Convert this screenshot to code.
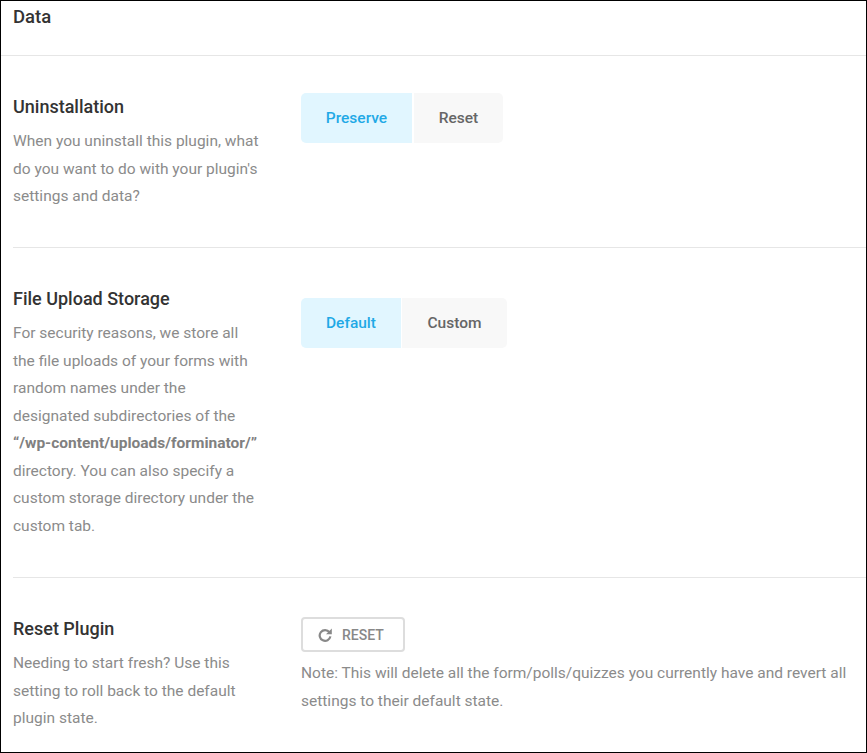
<div class="page">
  <div class="header"><h2>Data</h2></div>

  <section class="row first">
    <div class="label">
      <h3>Uninstallation</h3>
      <p>When you uninstall this plugin, what do you want to do with your plugin's settings and data?</p>
    </div>
    <div class="control">
      <div class="tabs">
        <button class="tab active preserve">Preserve</button>
        <button class="tab reset">Reset</button>
      </div>
    </div>
  </section>

  <section class="row second">
    <div class="label">
      <h3>File Upload Storage</h3>
      <p>For security reasons, we store all the file uploads of your forms with random names under the designated subdirectories of the <strong>“/wp-content/uploads/forminator/”</strong> directory. You can also specify a custom storage directory under the custom tab.</p>
    </div>
    <div class="control">
      <div class="tabs tight">
        <button class="tab active default">Default</button>
        <button class="tab custom">Custom</button>
      </div>
    </div>
  </section>

  <section class="row third">
    <div class="label">
      <h3>Reset Plugin</h3>
      <p>Needing to start fresh? Use this setting to roll back to the default plugin state.</p>
    </div>
    <div class="control">
      <button class="resetbtn">
        <svg width="14" height="14" viewBox="0 0 14 14" aria-hidden="true">
          <path d="M11.4 4.2A5.4 5.4 0 1 0 12.4 8.4" fill="none" stroke="currentColor" stroke-width="2.2" />
          <path d="M13.8 0.4V6.2H8Z" fill="currentColor" />
        </svg>
        RESET
      </button>
      <p class="note">Note: This will delete all the form/polls/quizzes you currently have and revert all settings to their default state.</p>
    </div>
  </section>
</div>

<style>
  :global(body) {
    margin: 0;
    background: #fff;
  }
  .page {
    box-sizing: border-box;
    width: 867px;
    height: 753px;
    border: 1px solid #000;
    overflow: hidden;
    font-family: Roboto, sans-serif;
    color: #888;
  }
  .header {
    height: 54px;
    border-bottom: 1px solid #e6e6e6;
    padding-left: 12px;
  }
  h2 {
    margin: 0;
    padding-top: 5px;
    font-size: 18.5px;
    line-height: 22px;
    font-weight: 500;
    color: #333;
  }
  .row {
    display: flex;
    margin-left: 12px;
    border-bottom: 1px solid #e6e6e6;
    padding-top: 37px;
  }
  .first {
    height: 154px;
  }
  .second {
    height: 292px;
  }
  .third {
    border-bottom: none;
  }
  .label {
    width: 250px;
    margin-right: 38px;
    flex: none;
  }
  h3 {
    margin: 0 0 7px;
    font-size: 18px;
    line-height: 28px;
    font-weight: 500;
    color: #333;
  }
  p {
    margin: 0;
    font-size: 15.5px;
    line-height: 27.5px;
    color: #8b8b8b;
  }
  strong {
    font-weight: 700;
    color: #808080;
  }
  .tabs {
    display: inline-flex;
    gap: 2px;
  }
  .tabs.tight {
    gap: 1px;
  }
  .second .tabs {
    margin-top: 13px;
  }
  .tab {
    height: 50px;
    border: none;
    padding: 0;
    font: 500 15.5px Roboto, sans-serif;
    background: #f8f8f8;
    color: #666;
  }
  .active {
    background: #e1f6ff;
    color: #1fa9e6;
  }
  .preserve {
    width: 111px;
    border-radius: 5px 0 0 5px;
  }
  .reset {
    width: 89px;
    border-radius: 0 5px 5px 0;
  }
  .default {
    width: 100px;
    border-radius: 5px 0 0 5px;
  }
  .custom {
    width: 105px;
    border-radius: 0 5px 5px 0;
  }
  .resetbtn {
    display: flex;
    align-items: center;
    gap: 10px;
    box-sizing: border-box;
    width: 104px;
    height: 35px;
    margin-top: 2px;
    padding: 0 0 0 15px;
    border: 2px solid #ddd;
    border-radius: 4px;
    background: #fff;
    color: #888;
    font: 500 14px Roboto, sans-serif;
  }
  .note {
    margin-top: 8px;
  }
</style>
